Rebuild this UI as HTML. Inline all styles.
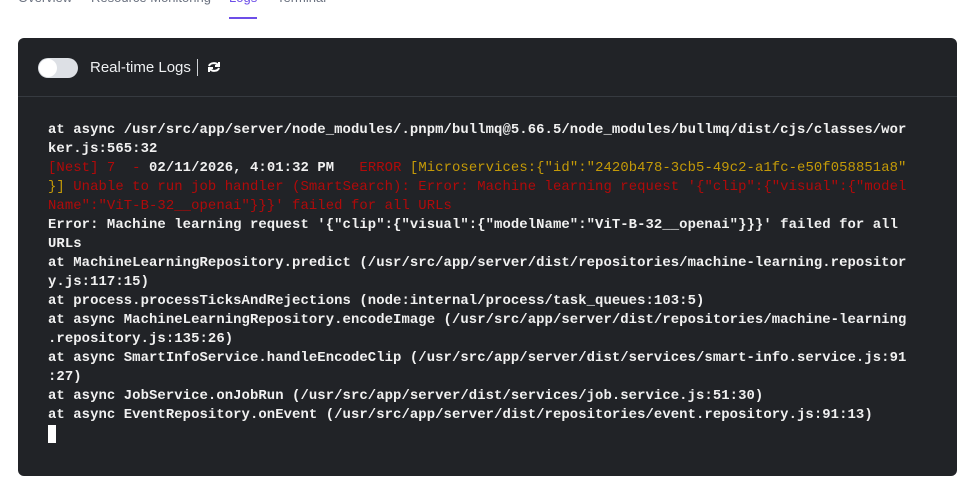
<!DOCTYPE html>
<html><head><meta charset="utf-8"><style>
*{margin:0;padding:0;box-sizing:border-box}
body{width:965px;height:484px;background:#fff;position:relative;overflow:hidden;font-family:"Liberation Sans",sans-serif}
.tabs{position:absolute;top:-10px;left:18px;font-size:13px;color:#6b7280;white-space:nowrap}
.tabs span{position:absolute;top:0}
.ul{position:absolute;left:229px;top:17px;width:28px;height:2px;background:#6d4ee8}
.card{position:absolute;left:18px;top:38px;width:939px;height:438px;background:#212327;border-radius:6px}
.hdr{height:59px;border-bottom:1px solid #363a40;position:relative}
.tog{position:absolute;left:20px;top:20px;width:40px;height:20px;border-radius:10px;background:#dde0e5}
.tog::after{content:"";position:absolute;left:1px;top:1px;width:18px;height:18px;border-radius:9px;background:#fff}
.ttl{position:absolute;left:72px;top:21px;color:#eef0f2;font-size:15px}
.sep{position:absolute;left:179px;top:21px;width:1px;height:17px;background:#cfd2d6}
pre{position:absolute;left:30px;top:83px;font-family:"Liberation Mono",monospace;font-size:13.9px;letter-spacing:0.08px;line-height:19px;color:#f1f1f1;font-weight:bold;white-space:pre}
.r{color:#b10a0a;font-weight:normal}.y{color:#c49a08;font-weight:normal}
.cur{display:inline-block;width:8px;height:18px;background:#fff;vertical-align:top}
</style></head><body>
<div class="tabs"><span style="left:0">Overview</span><span style="left:73px">Resource Monitoring</span><span style="left:211px;color:#6d4ee8">Logs</span><span style="left:259px">Terminal</span></div>
<div class="ul"></div>
<div class="card">
<div class="hdr"><div class="tog"></div><div class="ttl">Real-time Logs</div><div class="sep"></div>
<svg style="position:absolute;left:189px;top:22px" width="14" height="14" viewBox="0 0 14 14" fill="none" stroke="#fff" stroke-width="2"><path d="M2 6a5 4 0 0 1 9-1"/><path d="M12 2v4H8"/><path d="M12 8a5 4 0 0 1-9 1"/><path d="M2 12V8h4"/></svg>
</div>
<pre>at async /usr/src/app/server/node_modules/.pnpm/bullmq@5.66.5/node_modules/bullmq/dist/cjs/classes/wor
ker.js:565:32
<span class="r">[Nest] 7  - </span>02/11/2026, 4:01:32 PM   <span class="r">ERROR</span> <span class="y">[Microservices:{"id":"2420b478-3cb5-49c2-a1fc-e50f058851a8"
}]</span><span class="r"> Unable to run job handler (SmartSearch): Error: Machine learning request '{"clip":{"visual":{"model
Name":"ViT-B-32__openai"}}}' failed for all URLs</span>
Error: Machine learning request '{"clip":{"visual":{"modelName":"ViT-B-32__openai"}}}' failed for all
URLs
at MachineLearningRepository.predict (/usr/src/app/server/dist/repositories/machine-learning.repositor
y.js:117:15)
at process.processTicksAndRejections (node:internal/process/task_queues:103:5)
at async MachineLearningRepository.encodeImage (/usr/src/app/server/dist/repositories/machine-learning
.repository.js:135:26)
at async SmartInfoService.handleEncodeClip (/usr/src/app/server/dist/services/smart-info.service.js:91
:27)
at async JobService.onJobRun (/usr/src/app/server/dist/services/job.service.js:51:30)
at async EventRepository.onEvent (/usr/src/app/server/dist/repositories/event.repository.js:91:13)
<span class="cur"></span></pre>
</div>
</body></html>
